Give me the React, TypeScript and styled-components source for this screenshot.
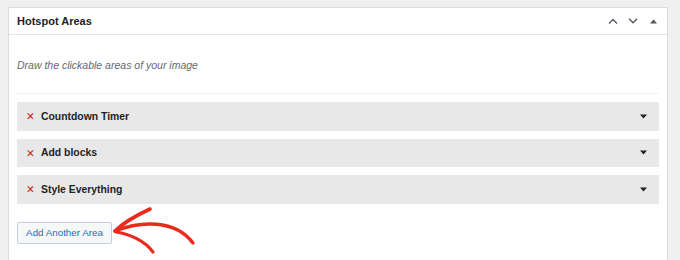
import styled, { createGlobalStyle } from "styled-components";

const GlobalStyle = createGlobalStyle`
  html, body {
    margin: 0;
    padding: 0;
    background: #f0f0f1;
    font-family: "Liberation Sans", Arial, sans-serif;
  }
`;

const Page = styled.div`
  padding: 7px 12px 0 8px;
  height: 260px;
  box-sizing: border-box;
  overflow: hidden;
`;

const Panel = styled.div`
  background: #fff;
  border: 1px solid #dcdcde;
  min-height: 270px;
`;

const PanelHeader = styled.div`
  height: 26px;
  display: flex;
  align-items: center;
  justify-content: space-between;
  padding: 0 8px;
  border-bottom: 1px solid #e2e4e7;
`;

const Title = styled.h2`
  margin: 0;
  font-size: 11px;
  font-weight: 700;
  color: #1d2327;
`;

const HeaderActions = styled.div`
  display: flex;
  align-items: center;
  gap: 10px;
  padding-right: 2px;
  svg {
    display: block;
  }
`;

const Body = styled.div`
  padding: 0 8px;
`;

const Description = styled.p`
  margin: 0;
  padding: 23px 0 21px;
  font-size: 10.5px;
  font-style: italic;
  color: #646970;
  line-height: 14px;
  border-bottom: 1px solid #f0f0f1;
`;

const AreaList = styled.div`
  display: flex;
  flex-direction: column;
  gap: 8px;
  padding-top: 8px;
`;

const AreaRow = styled.div`
  height: 28.5px;
  background: #e8e8e8;
  display: flex;
  align-items: center;
  padding: 0 12px 0 9px;
`;

const Remove = styled.span`
  color: #c9241a;
  font-size: 10.5px;
  font-weight: 700;
  font-family: "DejaVu Sans", sans-serif;
  width: 15px;
  line-height: 1;
`;

const AreaName = styled.span`
  flex: 1;
  font-size: 10.4px;
  font-weight: 700;
  color: #1d2327;
`;

const Footer = styled.div`
  position: relative;
  padding-top: 18px;
  height: 40px;
`;

const AddButton = styled.button`
  height: 22px;
  width: 95px;
  padding: 0;
  border: 1px solid #c5cdd8;
  border-radius: 2px;
  background: #f6f7f7;
  color: #2c6bb0;
  font-family: "Liberation Sans", Arial, sans-serif;
  font-size: 9.8px;
`;

const Annotation = styled.svg`
  position: absolute;
  left: 93px;
  top: -3px;
  overflow: visible;
`;

const Caret = () => (
  <svg width="7" height="5" viewBox="0 0 7 5">
    <path d="M0 0.5 H7 L3.5 4.5 Z" fill="#1d2327" />
  </svg>
);

const areas: string[] = ["Countdown Timer", "Add blocks", "Style Everything"];

const App = (): JSX.Element => {
  return (
    <>
      <GlobalStyle />
      <Page>
        <Panel>
          <PanelHeader>
            <Title>Hotspot Areas</Title>
            <HeaderActions>
              <svg width="10" height="6" viewBox="0 0 10 6">
                <path d="M1 5.5 L5 1.5 L9 5.5" stroke="#50575e" strokeWidth="1.3" fill="none" />
              </svg>
              <svg width="10" height="6" viewBox="0 0 10 6">
                <path d="M1 0.8 L5 4.8 L9 0.8" stroke="#50575e" strokeWidth="1.3" fill="none" />
              </svg>
              <svg width="7" height="5" viewBox="0 0 7 5" style={{ marginLeft: 2 }}>
                <path d="M0 4.5 H7 L3.5 0.5 Z" fill="#50575e" />
              </svg>
            </HeaderActions>
          </PanelHeader>
          <Body>
            <Description>Draw the clickable areas of your image</Description>
            <AreaList>
              {areas.map((name) => (
                <AreaRow key={name}>
                  <Remove>✕</Remove>
                  <AreaName>{name}</AreaName>
                  <Caret />
                </AreaRow>
              ))}
            </AreaList>
            <Footer>
              <AddButton>Add Another Area</AddButton>
              <Annotation width="90" height="60" viewBox="0 0 90 60">
                <g stroke="#ea2a1d" strokeLinecap="round" fill="none">
                  <path d="M5 30 C30 20 65 18 83 42" strokeWidth="3.4" />
                  <path d="M40 8 C25 15 12 23 5 30" strokeWidth="3.6" />
                  <path d="M6 31 C20 33 35 40 43 51" strokeWidth="3.2" />
                </g>
              </Annotation>
            </Footer>
          </Body>
        </Panel>
      </Page>
    </>
  );
};

export default App;
